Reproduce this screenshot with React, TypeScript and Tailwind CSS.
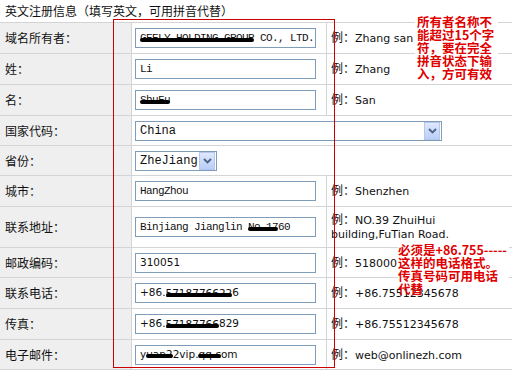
import type { ReactNode } from 'react'

const CJK = "font-['SimSun','Noto_Sans_CJK_SC',sans-serif]"
const MONO = "font-['Liberation_Mono','Noto_Sans_CJK_SC',monospace]"
const SANS = "font-['DejaVu_Sans','Noto_Sans_CJK_SC',sans-serif]"

// marker scribble over private data
function Redact({ children }: { children: ReactNode }) {
  return (
    <span className="relative inline-block leading-none">
      {children}
      <span className="absolute inset-x-0 top-[68%] h-[4px] -translate-y-1/2 rounded-full bg-black" />
    </span>
  )
}

function TextBox({ children, sans = false }: { children?: ReactNode; sans?: boolean }) {
  return (
    <div
      className={`w-[181px] h-[20px] border border-[#7f9db9] bg-white flex items-center pl-[4px] overflow-hidden whitespace-pre text-[#111] ${
        sans ? `${SANS} text-[10.5px]` : `${MONO} text-[11px] tracking-[-0.6px]`
      }`}
    >
      {children}
    </div>
  )
}

function Arrow() {
  return (
    <div className="w-[16px] h-[18px] ml-auto mr-[1px] border border-[#b4c8ef] bg-gradient-to-b from-[#dfe8fd] to-[#b9cdf7] flex items-center justify-center">
      <svg width="9" height="6" viewBox="0 0 9 6">
        <polyline points="1,1 4.5,4.5 8,1" fill="none" stroke="#4d6185" strokeWidth="1.8" />
      </svg>
    </div>
  )
}

function Dropdown({ value, width }: { value: string; width: string }) {
  return (
    <div className={`${width} h-[20px] border border-[#7f9db9] bg-white flex items-center pl-[4px] ${MONO} text-[12px] text-[#111]`}>
      {value}
      <Arrow />
    </div>
  )
}

type Row = {
  label: string
  h: string
  field: ReactNode
  example?: ReactNode
  span?: boolean
}

const rows: Row[] = [
  {
    label: '域名所有者：',
    h: 'h-[31px]',
    field: (
      <TextBox>
        <Redact>GEELY HOLDING GROUP</Redact> CO., LTD.
      </TextBox>
    ),
    example: 'Zhang san',
  },
  { label: '姓：', h: 'h-[31px]', field: <TextBox>Li</TextBox>, example: 'Zhang' },
  {
    label: '名：',
    h: 'h-[31px]',
    field: (
      <TextBox>
        <Redact>ShuFu</Redact>
      </TextBox>
    ),
    example: 'San',
  },
  { label: '国家代码：', h: 'h-[30px]', field: <Dropdown value="China" width="w-[307px]" />, span: true },
  { label: '省份：', h: 'h-[30px]', field: <Dropdown value="ZheJiang" width="w-[82px]" />, span: true },
  { label: '城市：', h: 'h-[31px]', field: <TextBox>HangZhou</TextBox>, example: 'Shenzhen' },
  {
    label: '联系地址：',
    h: 'h-[41px]',
    field: (
      <TextBox>
        Binjiang Jianglin <Redact>No.17</Redact>60
      </TextBox>
    ),
    example: (
      <>
        NO.39 ZhuiHui
        <br />
        building,FuTian Road.
      </>
    ),
  },
  { label: '邮政编码：', h: 'h-[30px]', field: <TextBox sans>310051</TextBox>, example: '518000' },
  {
    label: '联系电话：',
    h: 'h-[31px]',
    field: (
      <TextBox sans>
        +86.<Redact>5718776622</Redact>6
      </TextBox>
    ),
    example: '+86.75512345678',
  },
  {
    label: '传真：',
    h: 'h-[31px]',
    field: (
      <TextBox sans>
        +86.<Redact>57187766</Redact>829
      </TextBox>
    ),
    example: '+86.75512345678',
  },
  {
    label: '电子邮件：',
    h: 'h-[30px]',
    field: (
      <TextBox sans>
        y<Redact>uan2</Redact>2vip.<Redact>qq.c</Redact>om
      </TextBox>
    ),
    example: 'web@onlinezh.com',
  },
]

export default function App() {
  return (
    <div className="relative w-[512px] h-[370px] overflow-hidden bg-white text-[#111]">
      <div className={`h-[23px] border-b border-[#d4d4d4] flex items-center pl-[5px] ${CJK} text-[12px]`}>
        英文注册信息（填写英文，可用拼音代替）
      </div>

      {rows.map((r) => (
        <div key={r.label} className={`flex ${r.h} border-b border-[#d4d4d4]`}>
          <div className={`w-[132px] shrink-0 bg-[#efefef] border-r border-[#d4d4d4] flex items-center pl-[5px] ${CJK} text-[12px]`}>
            {r.label}
          </div>
          {r.span ? (
            <div className="flex-1 flex items-center pl-[3px]">{r.field}</div>
          ) : (
            <>
              <div className="w-[195px] shrink-0 border-r border-[#d4d4d4] flex items-center pl-[3px]">{r.field}</div>
              <div className="flex-1 flex items-center pl-[4px]">
                <p className={`${SANS} text-[11px] leading-[14px]`}>
                  <span className={`${CJK} text-[12px]`}>例：</span>
                  {r.example}
                </p>
              </div>
            </>
          )}
        </div>
      ))}

      {/* red highlight frame */}
      <div className="absolute left-[113px] top-[19px] w-[222px] h-[349px] border border-[#cc0000]" />

      {/* notes */}
      <div className={`absolute left-[415px] top-[14px] w-[83px] bg-white pl-[2px] pt-[1px] pb-[2px] whitespace-nowrap ${CJK} font-bold text-[12.5px] leading-[13px] text-[#e00000]`}>
        所有者名称不
        <br />
        能超过15个字
        <br />
        符，要在完全
        <br />
        拼音状态下输
        <br />
        入，方可有效
      </div>
      <div className={`absolute left-[398px] top-[243px] whitespace-nowrap ${CJK} font-bold text-[12.5px] leading-[13px] text-[#e00000]`}>
        <div className="bg-white pr-[2px]">
          必须是+86.755-----
          <br />
          这样的电话格式。
          <br />
          传真号码可用电话
        </div>
        <div>代替</div>
      </div>
    </div>
  )
}
